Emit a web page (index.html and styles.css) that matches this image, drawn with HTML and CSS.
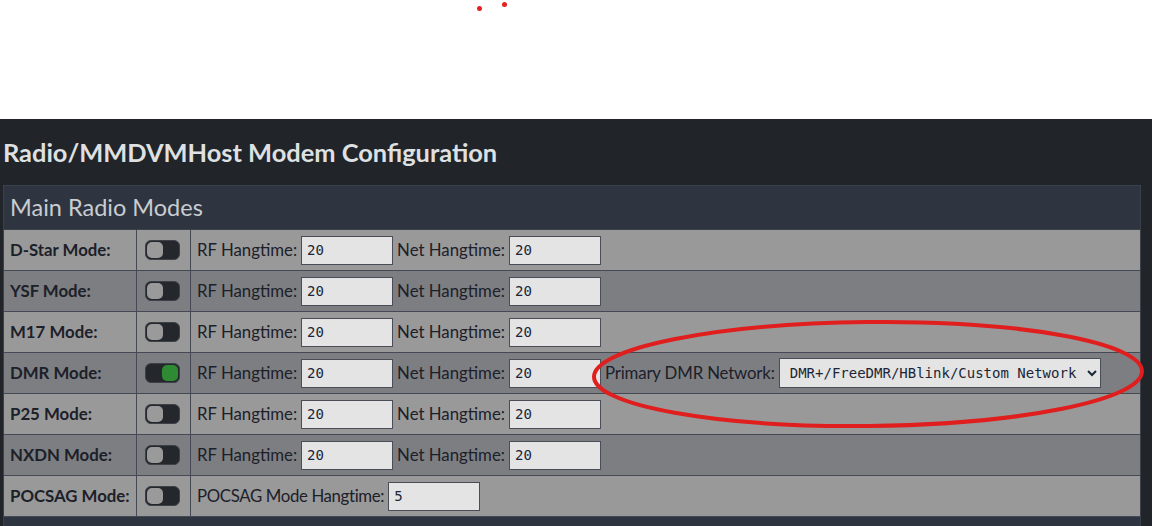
FILE: index.html
```html
<!DOCTYPE html>
<html>
<head>
<meta charset="utf-8">
<link rel="stylesheet" href="styles.css">
</head>
<body>
<div class="top">
  <span class="dot dot-a"></span>
  <span class="dot dot-b"></span>
</div>
<div class="panel">
  <h2 class="title">Radio/MMDVMHost Modem Configuration</h2>
  <div class="box">
    <div class="box-head">Main Radio Modes</div>
    <table class="modes">
      <tr class="light">
        <th>D-Star Mode:</th>
        <td class="sw"><span class="toggle"><span class="knob"></span></span></td>
        <td class="cfg"><div class="line"><span>RF Hangtime:</span><input class="num" value="20"><span>Net Hangtime:</span><input class="num" value="20"></div></td>
      </tr>
      <tr class="dark">
        <th>YSF Mode:</th>
        <td class="sw"><span class="toggle"><span class="knob"></span></span></td>
        <td class="cfg"><div class="line"><span>RF Hangtime:</span><input class="num" value="20"><span>Net Hangtime:</span><input class="num" value="20"></div></td>
      </tr>
      <tr class="light">
        <th>M17 Mode:</th>
        <td class="sw"><span class="toggle"><span class="knob"></span></span></td>
        <td class="cfg"><div class="line"><span>RF Hangtime:</span><input class="num" value="20"><span>Net Hangtime:</span><input class="num" value="20"></div></td>
      </tr>
      <tr class="dark">
        <th>DMR Mode:</th>
        <td class="sw"><span class="toggle on"><span class="knob"></span></span></td>
        <td class="cfg"><div class="line"><span>RF Hangtime:</span><input class="num" value="20"><span>Net Hangtime:</span><input class="num" value="20"><span class="net">Primary DMR Network:</span><select class="sel"><option>DMR+/FreeDMR/HBlink/Custom Network</option></select></div></td>
      </tr>
      <tr class="light">
        <th>P25 Mode:</th>
        <td class="sw"><span class="toggle"><span class="knob"></span></span></td>
        <td class="cfg"><div class="line"><span>RF Hangtime:</span><input class="num" value="20"><span>Net Hangtime:</span><input class="num" value="20"></div></td>
      </tr>
      <tr class="dark">
        <th>NXDN Mode:</th>
        <td class="sw"><span class="toggle"><span class="knob"></span></span></td>
        <td class="cfg"><div class="line"><span>RF Hangtime:</span><input class="num" value="20"><span>Net Hangtime:</span><input class="num" value="20"></div></td>
      </tr>
      <tr class="light">
        <th>POCSAG Mode:</th>
        <td class="sw"><span class="toggle"><span class="knob"></span></span></td>
        <td class="cfg"><div class="line"><span class="pocsag">POCSAG Mode Hangtime:</span><input class="num" value="5"></div></td>
      </tr>
    </table>
  </div>
</div>
<svg class="circle" width="570" height="120" viewBox="0 0 570 120">
  <ellipse cx="278" cy="57" rx="274" ry="52" fill="none" stroke="#e01e1e" stroke-width="4" transform="rotate(-0.6 278 57)"/>
</svg>
</body>
</html>
```
FILE: styles.css
```css
html, body {
  margin: 0;
  padding: 0;
  background: #212429;
  font-family: "Lato", "Noto Sans", sans-serif;
  overflow: hidden;
}
.top {
  height: 119px;
  background: #ffffff;
  position: relative;
}
.dot {
  position: absolute;
  width: 5px;
  height: 5px;
  border-radius: 50%;
  background: #e62020;
}
.dot-a { left: 477px; top: 6px; }
.dot-b { left: 502px; top: 2px; }
.panel {
  padding: 0 11px 0 3px;
}
.title {
  margin: 0;
  padding: 17px 0 17px 0;
  font-size: 25.4px;
  line-height: 32px;
  font-weight: 700;
  color: #dfe0e2;
}
.box {
  border: 1px solid #3b414c;
  background: #2e3540;
  padding-bottom: 12px;
}
.box-head {
  height: 43px;
  line-height: 42px;
  padding-left: 6px;
  font-size: 23.5px;
  color: #c9ccd1;
  border-bottom: 1px solid #3b414c;
}
.modes {
  width: 100%;
  border-collapse: collapse;
  table-layout: fixed;
}
.modes th, .modes td {
  border: 1px solid #444955;
  padding: 6px 6px;
  height: 28px;
  font-size: 16.8px;
  line-height: 20px;
  color: #1c2029;
  white-space: nowrap;
  overflow: visible;
}
.modes tr:first-child th, .modes tr:first-child td { border-top: none; }
.modes th, .modes td.sw { border-left: none; }
.modes td.cfg { border-right: none; }
.modes th {
  text-align: left;
  font-weight: 700;
  width: 120px;
}
.modes td.sw {
  width: 45px;
  padding: 6px 0 6px 8px;
}
.line {
  display: flex;
  align-items: center;
  gap: 4px;
  height: 28px;
}
.light { background: #999999; }
.dark { background: #7d7e82; }
.toggle {
  display: block;
  width: 35px;
  height: 20px;
  box-sizing: border-box;
  border-radius: 6px;
  background: #24272c;
  border: 1px solid #3c4048;
  position: relative;
}
.knob {
  position: absolute;
  left: 1px;
  top: 1px;
  width: 16px;
  height: 16px;
  border-radius: 5px;
  background: #9a9a9a;
}
.toggle.on .knob {
  left: auto;
  right: 1px;
  background: #2e8b33;
}
.num {
  width: 92px;
  height: 29px;
  box-sizing: border-box;
  border: 1px solid #4a4d57;
  background: #e4e4e4;
  font-family: "DejaVu Sans Mono", monospace;
  font-size: 14px;
  color: #1c2636;
  padding: 0 5px;
  margin: 0;
  flex: none;
}
.net {
  margin-left: 0;
  letter-spacing: -0.15px;
}
.pocsag {
  letter-spacing: -0.35px;
}
.sel {
  width: 322px;
  height: 30px;
  box-sizing: border-box;
  border: 1px solid #4a4d57;
  background: #e4e4e4;
  font-family: "DejaVu Sans Mono", monospace;
  font-size: 14px;
  color: #1c2636;
  padding: 0 6px;
  border-radius: 0;
  margin: 0;
  flex: none;
}
.circle {
  position: absolute;
  left: 590px;
  top: 317px;
}
```
